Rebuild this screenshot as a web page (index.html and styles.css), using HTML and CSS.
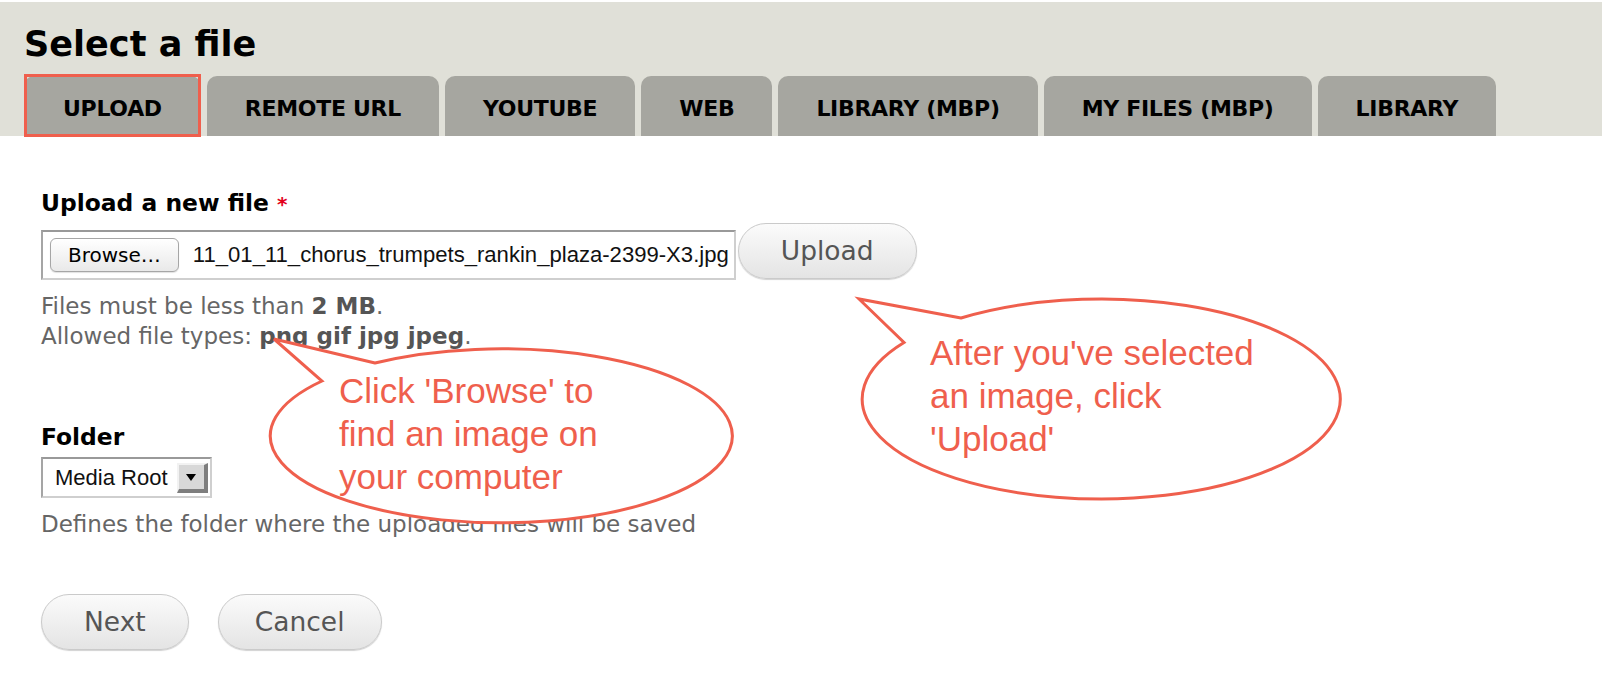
FILE: index.html
```html
<!DOCTYPE html>
<html lang="en">
<head>
<meta charset="utf-8">
<title>Select a file</title>
<link rel="stylesheet" href="styles.css">
</head>
<body>
<div class="page">
  <header class="head">
    <h1 class="title">Select a file</h1>
    <nav class="tabs">
      <span class="tab tab-active">UPLOAD</span>
      <span class="tab">REMOTE URL</span>
      <span class="tab">YOUTUBE</span>
      <span class="tab">WEB</span>
      <span class="tab">LIBRARY (MBP)</span>
      <span class="tab">MY FILES (MBP)</span>
      <span class="tab">LIBRARY</span>
    </nav>
  </header>

  <main class="form">
    <section class="field">
      <div class="label">Upload a new file <span class="req">*</span></div>
      <div class="file-row">
        <div class="file-box">
          <span class="browse">Browse…</span>
          <span class="fname">11_01_11_chorus_trumpets_rankin_plaza-2399-X3.jpg</span>
        </div>
        <span class="btn">Upload</span>
      </div>
      <div class="help">
        <div>Files must be less than <b>2 MB</b>.</div>
        <div>Allowed file types: <b>png gif jpg jpeg</b>.</div>
      </div>
    </section>

    <section class="field folder">
      <div class="label">Folder</div>
      <div class="select">
        <span class="select-text">Media Root</span>
        <span class="select-arrow"></span>
      </div>
      <div class="help">Defines the folder where the uploaded files will be saved</div>
    </section>

    <div class="actions">
      <span class="btn">Next</span>
      <span class="btn btn-cancel">Cancel</span>
    </div>
  </main>

  <svg class="notes" width="1602" height="690" viewBox="0 0 1602 690">
    <path class="bubble" d="M 375 363 L 274 339 L 322 381 A 231 87 0 1 0 375 363 Z"/>
    <text class="note-text">
      <tspan x="339" y="403">Click 'Browse' to</tspan>
      <tspan x="339" y="446">find an image on</tspan>
      <tspan x="339" y="489">your computer</tspan>
    </text>
    <path class="bubble" d="M 961 318 L 859 299 L 904 342.5 A 239 100 0 1 0 961 318 Z"/>
    <text class="note-text">
      <tspan x="930" y="365">After you've selected</tspan>
      <tspan x="930" y="408">an image, click</tspan>
      <tspan x="930" y="451">'Upload'</tspan>
    </text>
  </svg>
</div>
</body>
</html>
```

FILE: styles.css
```css
html, body {
  margin: 0;
  padding: 0;
  background: #ffffff;
}

.page {
  position: relative;
  padding-top: 2px;
  min-height: 688px;
  font-family: "DejaVu Sans", "Noto Sans", sans-serif;
  color: #000;
}

.head {
  background: #e0e0d8;
  padding: 22px 0 0 24px;
}

.title {
  margin: 0;
  font-size: 35.1px;
  line-height: 40px;
  font-weight: bold;
  color: #000;
}

.tabs {
  display: flex;
  gap: 6px;
  margin-top: 12px;
}

.tab {
  display: block;
  height: 60px;
  box-sizing: border-box;
  padding: 6px 38px 0;
  line-height: 54px;
  font-size: 22px;
  font-weight: bold;
  letter-spacing: -0.3px;
  background: #a6a6a0;
  border-radius: 10px 10px 0 0;
  color: #000;
  white-space: nowrap;
}

.tab-active {
  position: relative;
  padding: 6px 39px 0;
}

.tab-active::after {
  content: "";
  position: absolute;
  left: 0;
  right: 0;
  top: -2px;
  bottom: -1px;
  border: 3px solid #ef5f4d;
}

.form {
  padding: 52px 0 0 41px;
}

.label {
  font-size: 23.4px;
  line-height: 30px;
  font-weight: bold;
  color: #000;
}

.req {
  color: #e3001b;
  font-size: 20px;
}

.file-row {
  display: flex;
  align-items: flex-end;
  gap: 2px;
  margin-top: 4px;
}

.file-box {
  display: flex;
  align-items: center;
  gap: 14px;
  height: 50px;
  box-sizing: border-box;
  border: 2px solid;
  border-color: #999999 #cfcfcf #cfcfcf #a5a5a5;
  padding: 0 5px 0 7px;
}

.browse {
  display: block;
  height: 34px;
  box-sizing: border-box;
  border: 1px solid #a6a6a6;
  border-radius: 6px;
  background: linear-gradient(#ffffff, #e9e9e9);
  box-shadow: 0 1px 1px rgba(0, 0, 0, 0.12);
  padding: 0 17px;
  font-size: 20px;
  line-height: 32px;
  color: #000;
}

.fname {
  font-family: "Liberation Sans", Arial, sans-serif;
  font-size: 22.1px;
  color: #111;
  white-space: nowrap;
}

.btn {
  display: block;
  height: 56px;
  box-sizing: border-box;
  border: 1px solid #cacaca;
  border-radius: 28px;
  background: linear-gradient(#fbfbfb, #e4e4e4);
  box-shadow: 0 1px 1px rgba(0, 0, 0, 0.18);
  padding: 0 42px;
  font-size: 26.5px;
  line-height: 54px;
  color: #555;
  margin-bottom: 1px;
}

.btn-cancel {
  padding: 0 36px;
}

.help {
  margin-top: 11px;
  font-size: 23px;
  line-height: 30px;
  color: #666;
}

.help b {
  color: #555;
}

.folder {
  margin-top: 71px;
}

.select {
  display: flex;
  align-items: center;
  justify-content: space-between;
  margin-top: 5px;
  width: 171px;
  height: 41px;
  box-sizing: border-box;
  border: 2px solid;
  border-color: #999999 #cfcfcf #cfcfcf #a5a5a5;
  padding: 0 2px 0 12px;
}

.select-text {
  font-family: "Liberation Sans", Arial, sans-serif;
  font-size: 22px;
  color: #111;
}

.select-arrow {
  position: relative;
  width: 31px;
  height: 30px;
  box-sizing: border-box;
  background: #d8d8d8;
  border-style: solid;
  border-width: 2px 4px 4px 2px;
  border-color: #f2f2f2 #7e7e7e #7e7e7e #f2f2f2;
}

.select-arrow::after {
  content: "";
  position: absolute;
  left: 7px;
  top: 9px;
  border-left: 5px solid transparent;
  border-right: 5px solid transparent;
  border-top: 7px solid #000;
}

.actions {
  display: flex;
  gap: 29px;
  margin-top: 55px;
}

.notes {
  position: absolute;
  top: 0;
  left: 0;
  pointer-events: none;
}

.bubble {
  fill: #ffffff;
  stroke: #ef5f4d;
  stroke-width: 3;
  stroke-linejoin: miter;
}

.note-text {
  font-family: "Liberation Sans", Arial, sans-serif;
  font-size: 35px;
  fill: #ef5f4d;
}
```
